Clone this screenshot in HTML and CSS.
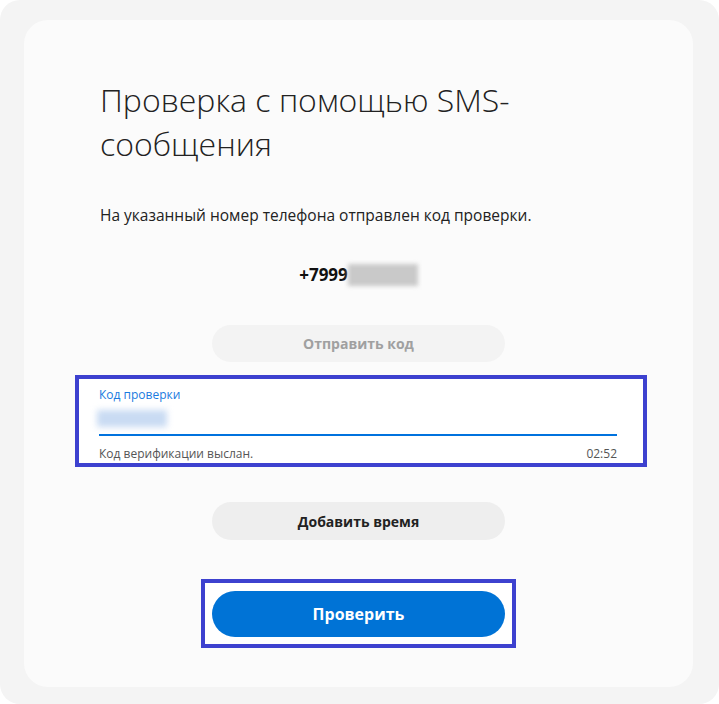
FILE: index.html
```html
<!DOCTYPE html>
<html lang="ru">
<head>
    <meta charset="UTF-8">
    <meta name="viewport" content="width=device-width, initial-scale=1.0">
    <title>Проверка с помощью SMS-сообщения</title>
    <link rel="stylesheet" href="styles.css">
</head>
<body>
    <div class="frame">
        <div class="card">
            <div class="content">
                <h1 class="title">Проверка с помощью SMS-<br>сообщения</h1>
                <p class="subtitle">На указанный номер телефона отправлен код проверки.</p>
                <div class="phone">
                    <span>+7999</span><span class="phone-hidden"></span>
                </div>
                <button class="btn btn-disabled" disabled>Отправить код</button>
                <div class="highlight code-box">
                    <label class="code-label" for="code">Код проверки</label>
                    <div class="code-value"><span class="code-blur"></span></div>
                    <div class="code-line"></div>
                    <div class="code-helper">
                        <span>Код верификации выслан.</span>
                        <span>02:52</span>
                    </div>
                </div>
                <button class="btn btn-light">Добавить время</button>
                <div class="highlight submit-box">
                    <button class="btn btn-primary">Проверить</button>
                </div>
            </div>
        </div>
    </div>
</body>
</html>
```

FILE: styles.css
```css
    body {
        margin: 0;
        background: #fff;
        font-family: "Open Sans", "Noto Sans", sans-serif;
        color: #222;
    }

    .frame {
        height: 704px;
        box-sizing: border-box;
        padding: 20px 26px 17px 24px;
        background: #f4f4f4;
        border-radius: 20px;
    }

    .card {
        height: 100%;
        background: #fbfbfb;
        border-radius: 24px;
        padding: 58px 0 0 76px;
        box-sizing: border-box;
    }

    .content {
        width: 517px;
        display: flex;
        flex-direction: column;
        align-items: center;
    }

    .title {
        align-self: stretch;
        margin: 0;
        font-size: 32px;
        font-weight: 300;
        line-height: 44px;
        color: #222;
    }

    .subtitle {
        align-self: stretch;
        margin: 38px 0 0;
        font-size: 15.5px;
        line-height: 22px;
        color: #222;
    }

    .phone {
        margin-top: 37px;
        display: flex;
        align-items: center;
        font-size: 17px;
        font-weight: 700;
        line-height: 24px;
        color: #111;
    }

    .phone-hidden {
        width: 70px;
        height: 22px;
        background: #c9c9c9;
        filter: blur(2px);
    }

    .btn {
        width: 293px;
        border: none;
        border-radius: 20px;
        font-family: inherit;
        font-weight: 700;
        font-size: 14px;
        cursor: pointer;
    }

    .btn-disabled {
        margin-top: 38px;
        height: 37px;
        background: #f3f3f3;
        color: #a0a0a0;
        cursor: default;
    }

    .btn-light {
        margin-top: 35px;
        height: 38px;
        background: #eeeeee;
        color: #222;
    }

    .btn-primary {
        height: 46px;
        border-radius: 23px;
        background: #0073d6;
        color: #fff;
        font-size: 16px;
    }

    .highlight {
        background: #fff;
        border: 4px solid #3d41cf;
    }

    .code-box {
        align-self: stretch;
        margin: 13px -30px 0 -25px;
        padding: 8px 26px 1px 20px;
    }

    .code-label {
        display: block;
        font-size: 12px;
        line-height: 16px;
        color: #1a7be0;
    }

    .code-value {
        height: 31px;
        display: flex;
        align-items: center;
    }

    .code-blur {
        width: 70px;
        height: 17px;
        margin-left: -2px;
        background: #c9dbf3;
        filter: blur(3px);
    }

    .code-line {
        height: 2px;
        background: #0072de;
    }

    .code-helper {
        margin-top: 10px;
        display: flex;
        justify-content: space-between;
        font-size: 12px;
        line-height: 16px;
        color: #555;
    }

    .submit-box {
        margin-top: 39px;
        padding: 8px 7px 7px;
    }
```
